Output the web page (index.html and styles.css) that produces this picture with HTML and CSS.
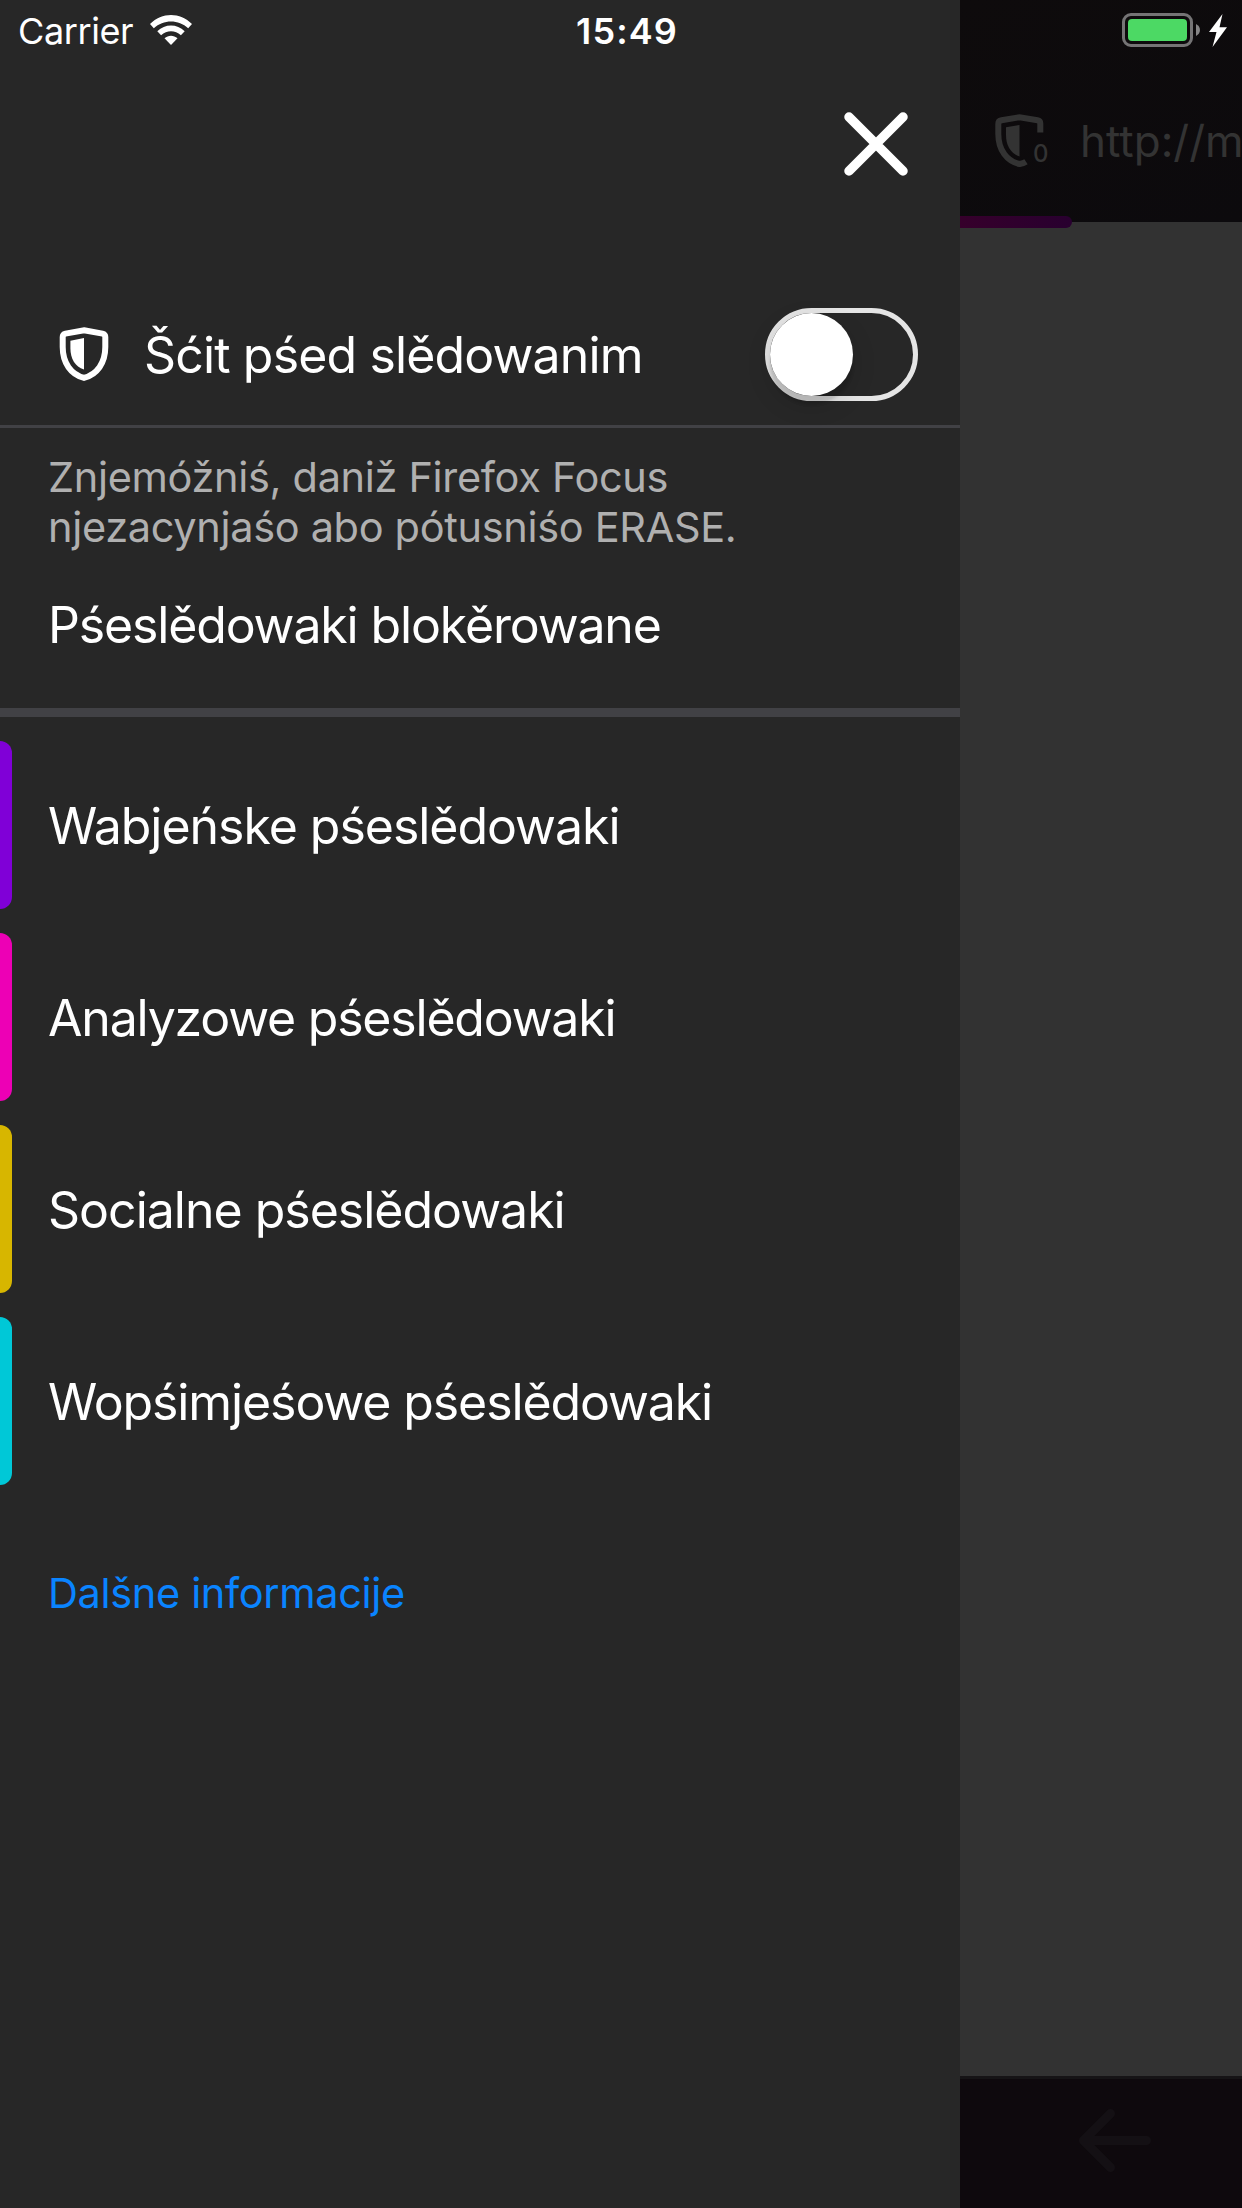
FILE: index.html
```html
<!DOCTYPE html>
<html lang="dsb">
<head>
<meta charset="utf-8">
<title>Firefox Focus</title>
<link rel="stylesheet" href="styles.css">
</head>
<body>
<div class="screen">
  <aside class="drawer">
    <header class="drawer-head">
      <svg class="close" viewBox="0 0 64 64"><path d="M5 5L59 59M59 5L5 59"/></svg>
    </header>
    <section class="toggle-row">
      <svg class="shield" viewBox="0 0 50 54">
        <path class="line" d="M25 3.2L43.5 6.6Q46.3 7.2 46.3 10V20C46.3 36 38 47.5 25 50.8C12 47.5 3.7 36 3.7 20V10Q3.7 7.2 6.5 6.6Z"/>
        <path class="solid" d="M25 11L11.4 13.8V21C11.4 32 16 39.500 25 42.500Z"/>
      </svg>
      <span class="toggle-label">Šćit pśed slědowanim</span>
      <span class="switch"><span class="knob"></span></span>
    </section>
    <p class="note">Znjemóžniś, daniž Firefox Focus<br>njezacynjaśo abo pótusniśo ERASE.</p>
    <h2 class="summary">Pśeslědowaki blokěrowane</h2>
    <ul class="trackers">
      <li class="tracker ads"><span>Wabjeńske pśeslědowaki</span></li>
      <li class="tracker analytics"><span>Analyzowe pśeslědowaki</span></li>
      <li class="tracker social"><span>Socialne pśeslědowaki</span></li>
      <li class="tracker content"><span>Wopśimjeśowe pśeslědowaki</span></li>
    </ul>
    <a class="more">Dalšne informacije</a>
  </aside>
  <main class="browser">
    <header class="url-bar">
      <div class="badge">
        <svg class="shield-dim" viewBox="0 0 50 54">
          <path class="line" d="M45.300 18.500V9.500Q45.300 6.800 42.500 6.300L24.700 3.200L6.500 6.300Q3.300 6.800 3.300 10V20C3.300 36 12 47.500 24.700 50C27.500 49.600 29.500 48.800 31 47.800"/>
          <path class="solid" d="M24.500 11L11 13.300V21C11 32 16 39.500 24.500 42.500Z"/>
        </svg>
        <span class="count">0</span>
      </div>
      <span class="url">http://m</span>
      <div class="progress"></div>
    </header>
    <div class="page"></div>
    <footer class="toolbar">
      <svg class="back" viewBox="0 0 72 63"><path d="M31.500 4.500L4.500 31.500L31.500 58.500M4.500 31.500H67.500"/></svg>
    </footer>
  </main>
  <div class="status">
    <div class="status-left">
      <span class="carrier">Carrier</span>
      <svg class="wifi" viewBox="0 0 42 30">
        <path d="M0 9C12-3 30-3 42 9L38.200 13.300C28.500 4.200 13.500 4.200 3.800 13.300Z"/>
        <path d="M7.300 16.300C15 8.600 27 8.600 34.700 16.300L30.900 20.300C25.200 14.900 16.800 14.900 11.100 20.300Z"/>
        <path d="M14.500 23.300C18.300 19.800 23.700 19.800 27.500 23.300L21 30Z"/>
      </svg>
    </div>
    <span class="clock">15:49</span>
    <div class="status-right">
      <span class="battery"><span class="charge"></span></span>
      <svg class="nub" viewBox="0 0 4 12"><path d="M0 0C5.300 2.500 5.300 9.500 0 12Z"/></svg>
      <svg class="bolt" viewBox="0 0 18 33"><path d="M13.500 0L0 18H7.500L3.500 33L18 13.300H10.500Z"/></svg>
    </div>
  </div>
</div>
</body>
</html>
```
FILE: styles.css
```css
* { box-sizing: border-box; }
body {
  margin: 0;
  background: #272727;
  color: #fff;
  font-family: Inter, "Liberation Sans", sans-serif;
}
svg { display: block; flex: none; fill: none; }
span { white-space: nowrap; }
.screen {
  position: relative;
  display: flex;
  width: 1242px;
  height: 2208px;
  overflow: hidden;
}

/* Side drawer */
.drawer {
  display: flex;
  flex-direction: column;
  width: 960px;
  background: #272727;
}
.drawer-head {
  display: flex;
  justify-content: flex-end;
  height: 284px;
  padding: 112px 52px 0 0;
}
.close {
  width: 64px;
  height: 64px;
  stroke: #fff;
  stroke-width: 9.5;
  stroke-linecap: round;
}
.toggle-row {
  display: flex;
  align-items: center;
  height: 144px;
  padding: 0 42px 0 59px;
  border-bottom: 3px solid #414145;
}
.shield { width: 50px; height: 54px; margin-bottom: 2px; }
.shield .line { stroke: #fff; stroke-width: 6; }
.shield .solid { fill: #fff; }
.toggle-label {
  margin-left: 35px;
  font-size: 50px;
  letter-spacing: -0.86px;
}
.switch {
  display: flex;
  width: 153px;
  height: 93px;
  margin-left: auto;
  border: 5px solid #e5e5e5;
  border-radius: 47px;
}
.knob {
  width: 83px;
  height: 83px;
  border-radius: 50%;
  background: #fff;
  box-shadow: 0 9px 24px rgba(0, 0, 0, 0.15), 0 9px 3px rgba(0, 0, 0, 0.12);
}
.note {
  height: 134px;
  margin: 0;
  padding: 24px 0 0 48px;
  color: #b0b0b0;
  font-size: 41.500px;
  line-height: 50px;
  letter-spacing: -0.33px;
}
.summary {
  height: 155px;
  margin: 0;
  padding: 33px 0 0 48px;
  border-bottom: 9px solid #414145;
  font-size: 50px;
  font-weight: 400;
  line-height: 60px;
  letter-spacing: -1.15px;
}
.trackers {
  display: flex;
  flex-direction: column;
  gap: 24px;
  margin: 24px 0 0;
  padding: 0;
  list-style: none;
}
.tracker {
  display: flex;
  align-items: center;
  gap: 36px;
  height: 168px;
  font-size: 50px;
  letter-spacing: -1.03px;
}
.tracker::before {
  content: "";
  width: 12px;
  height: 168px;
  border-radius: 0 12px 12px 0;
  background: currentColor;
}
.tracker span { padding-top: 2px; color: #fff; }
.ads { color: #8000d7; }
.analytics { color: #ed00b5; letter-spacing: -1.2px; }
.social { color: #d7b600; letter-spacing: -1px; }
.content { color: #00c8d7; letter-spacing: -1.1px; }
.more {
  margin: 83px 0 0 48px;
  color: #0a84ff;
  font-size: 41.500px;
  line-height: 50px;
  letter-spacing: -0.35px;
}

/* Dimmed browser behind the drawer */
.browser {
  display: flex;
  flex-direction: column;
  flex: 1;
  overflow: hidden;
}
.url-bar {
  position: relative;
  display: flex;
  align-items: center;
  height: 222px;
  padding: 60px 0 0 35px;
  background: linear-gradient(160deg, #0e0b0c, #0c0a0d);
  color: #333;
}
.badge { position: relative; }
.shield-dim { width: 50px; height: 54px; }
.shield-dim .line { stroke: #333; stroke-width: 6; }
.shield-dim .solid { fill: #333; }
.count {
  position: absolute;
  left: 38px;
  top: 25px;
  font-size: 24px;
  font-weight: 500;
  line-height: 30px;
}
.url { margin-left: 35px; font-size: 44px; }
.progress {
  position: absolute;
  left: 0;
  bottom: -6px;
  width: 112px;
  height: 12px;
  border-radius: 0 6px 6px 0;
  background: linear-gradient(90deg, #36002b, #28002f);
}
.page { flex: 1; background: #323232; }
.toolbar {
  height: 132px;
  padding: 30px 0 0 119px;
  border-top: 3px solid #161416;
  background: #0e090d;
}
.back {
  width: 72px;
  height: 63px;
  stroke: #141014;
  stroke-width: 9;
  stroke-linecap: round;
  stroke-linejoin: round;
}

/* Status bar laid over both panes */
.status {
  position: absolute;
  inset: 0 0 auto;
  display: grid;
  grid-template-columns: 1fr auto 1fr;
  align-items: center;
  height: 60px;
  padding: 0 15px 0 18px;
}
.status-left, .status-right { display: flex; align-items: center; }
.status-right { justify-content: flex-end; }
.carrier { width: 132px; padding-top: 2px; font-size: 36px; letter-spacing: -0.4px; }
.wifi { width: 42px; height: 30px; fill: #fff; }
.clock { padding: 2px 0 0 9px; font-size: 36px; font-weight: 600; letter-spacing: 1.1px; }
.battery {
  width: 71px;
  height: 34px;
  padding: 3px;
  border: 3px solid #757475;
  border-radius: 9px;
}
.charge {
  display: block;
  height: 22px;
  border-radius: 4px;
  background: #4cd964;
}
.nub { width: 4px; height: 12px; margin-left: 3px; fill: #868586; }
.bolt { width: 18px; height: 33px; margin-left: 9px; fill: #fff; }
```
